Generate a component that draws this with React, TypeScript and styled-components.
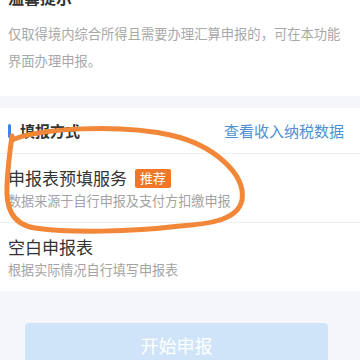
import React from "react";
import styled, { createGlobalStyle } from "styled-components";

const Global = createGlobalStyle`
  html, body { margin: 0; padding: 0; }
  body {
    width: 360px; height: 360px; overflow: hidden;
    background: #f4f6f9;
    font-family: "Noto Sans CJK SC", "Noto Sans", sans-serif;
  }
`;

const Page = styled.div`
  position: relative;
  width: 360px;
  height: 360px;
  overflow: hidden;
  background: #f4f6f9;
`;

const Notice = styled.section`
  background: #fff;
  margin-top: -14px;
  padding: 0 8px 22px 8px;
`;

const NoticeTitle = styled.div`
  font-size: 16px;
  font-weight: 700;
  line-height: 22px;
  color: #333;
`;

const NoticeText = styled.p`
  margin: 12px 0 0 0;
  font-size: 13.3px;
  line-height: 27px;
  color: #a8a8a8;
`;

const Card = styled.section`
  margin-top: 12px;
  background: #fff;
`;

const Header = styled.div`
  height: 45px;
  display: flex;
  align-items: center;
  justify-content: space-between;
  padding: 0 16px 0 8px;
  border-bottom: 1px solid #eeeff1;
`;

const HeaderTitle = styled.div`
  display: flex;
  align-items: center;
  gap: 9px;
  font-size: 15px;
  font-weight: 700;
  color: #333;
`;

const Bar = styled.span`
  width: 3px;
  height: 14px;
  border-radius: 2px;
  background: #3d82ee;
`;

const Link = styled.span`
  font-size: 15px;
  color: #4f8fd6;
`;

const Option = styled.div<{ $last?: boolean }>`
  padding: 12px 8px;
  border-bottom: ${(p) => (p.$last ? "none" : "1px solid #eeeff1")};
`;

const OptionTitle = styled.div`
  display: flex;
  align-items: center;
  gap: 8px;
  font-size: 17px;
  line-height: 24px;
  color: #333;
`;

const Badge = styled.span`
  display: inline-flex;
  align-items: center;
  justify-content: center;
  height: 19px;
  padding: 0 5px;
  border-radius: 2px;
  background: #f07628;
  color: #fff;
  font-size: 13px;
`;

const OptionSub = styled.div`
  margin-top: 2px;
  font-size: 13.1px;
  line-height: 18px;
  color: #a3a3a3;
`;

const Footer = styled.div`
  padding: 32px 0 0 25px;
`;

const StartButton = styled.button`
  width: 303px;
  height: 44px;
  border: none;
  border-radius: 4px;
  background: #cfe4f9;
  color: #fff;
  font-family: inherit;
  font-size: 18px;
`;

const Annotation = styled.svg`
  position: absolute;
  left: 0;
  top: 0;
  pointer-events: none;
`;

export default function App() {
  return (
    <Page>
      <Global />
      <Notice>
        <NoticeTitle>温馨提示</NoticeTitle>
        <NoticeText>
          仅取得境内综合所得且需要办理汇算申报的，可在本功能界面办理申报。
        </NoticeText>
      </Notice>
      <Card>
        <Header>
          <HeaderTitle>
            <Bar />
            填报方式
          </HeaderTitle>
          <Link>查看收入纳税数据</Link>
        </Header>
        <Option>
          <OptionTitle>
            申报表预填服务
            <Badge>推荐</Badge>
          </OptionTitle>
          <OptionSub>数据来源于自行申报及支付方扣缴申报</OptionSub>
        </Option>
        <Option $last>
          <OptionTitle>空白申报表</OptionTitle>
          <OptionSub>根据实际情况自行填写申报表</OptionSub>
        </Option>
      </Card>
      <Footer>
        <StartButton>开始申报</StartButton>
      </Footer>
      <Annotation width="360" height="360" viewBox="0 0 360 360">
        <path
          d="M12,140 C40,128 120,124 170,135 C215,145 246,175 242,200 C238,220 210,224 180,226 C130,232 70,233 35,228 C10,224 6,205 7,185 C8,165 10,150 12,136"
          fill="none"
          stroke="#f2873a"
          strokeWidth="5"
          strokeLinecap="round"
        />
      </Annotation>
    </Page>
  );
}
